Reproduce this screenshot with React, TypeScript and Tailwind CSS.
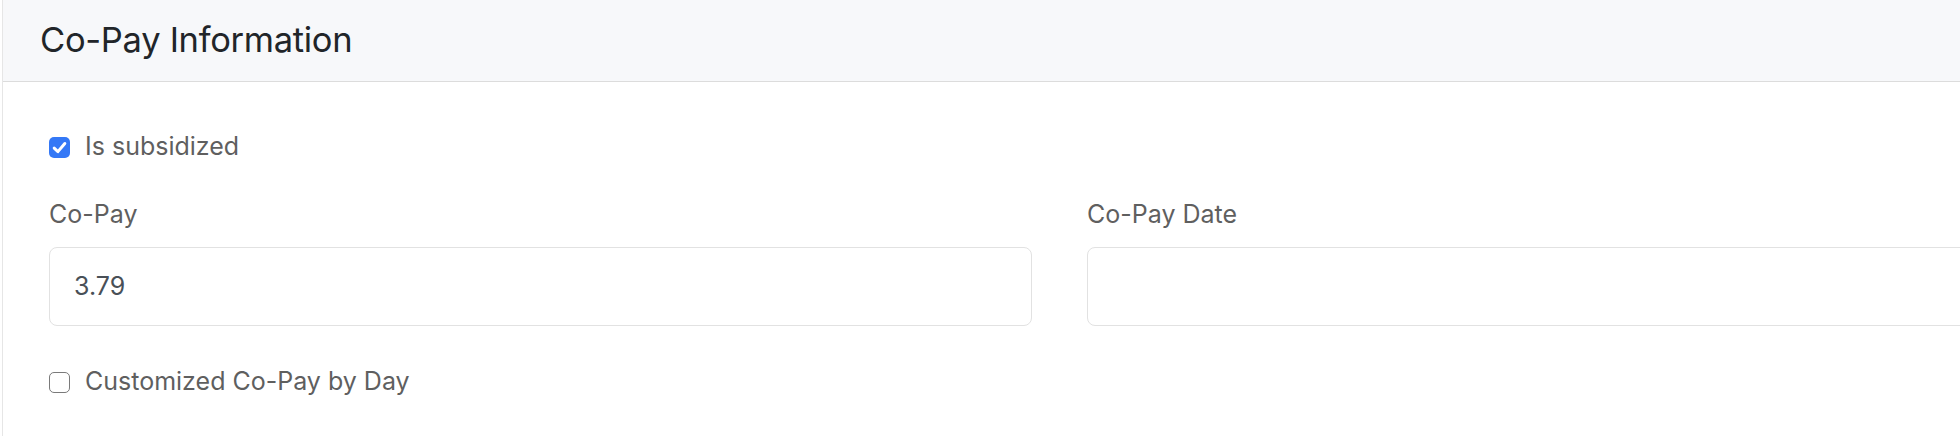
import React from "react";

function CheckedBox() {
  return (
    <span className="flex h-[21px] w-[21px] shrink-0 items-center justify-center rounded-[5px] bg-[#3478f6]">
      <svg width="17" height="17" viewBox="0 0 16 16" fill="none">
        <path d="M3 8.6 L6.5 11.9 L13 4.2" stroke="white" strokeWidth="2.8" strokeLinecap="round" strokeLinejoin="round" />
      </svg>
    </span>
  );
}

function EmptyBox() {
  return <span className="block h-[21px] w-[21px] shrink-0 rounded-[5px] border-[1.5px] border-[#7a7a7a] bg-white" />;
}

export default function App() {
  return (
    <div className="h-[436px] w-[1960px] overflow-hidden bg-white" style={{ fontFamily: "Inter, 'Noto Sans', sans-serif" }}>
      <div className="ml-[2px] h-full w-[2120px] border-l border-[#e6e6e6] bg-white">
        <div className="flex h-[82px] items-center border-b border-[#dcdcdc] bg-[#f7f8fa] pl-[37px]">
          <h4 className="text-[34.5px] font-normal leading-none tracking-[-0.3px] text-[#212529]">Co-Pay Information</h4>
        </div>
        <div className="px-[46px] pt-[49px]">
          <label className="flex h-[32px] items-center gap-[15px]">
            <CheckedBox />
            <span className="text-[25px] text-[#5f5f5f]">Is subsidized</span>
          </label>
          <div className="mt-[33px] grid grid-cols-[983px_983px] gap-x-[55px]">
            <div>
              <div className="flex h-[38px] items-center text-[25px] text-[#5f5f5f]">Co-Pay</div>
              <div className="mt-[13px] flex h-[79px] items-center rounded-[8px] border border-[#e2e2e2] bg-white pl-[24px] text-[25px] text-[#495057]">
                3.79
              </div>
            </div>
            <div>
              <div className="flex h-[38px] items-center text-[25px] text-[#5f5f5f]">Co-Pay Date</div>
              <div className="mt-[13px] h-[79px] rounded-[8px] border border-[#e2e2e2] bg-white" />
            </div>
          </div>
          <label className="mt-[40px] flex h-[32px] items-center gap-[15px]">
            <EmptyBox />
            <span className="text-[25px] text-[#5f5f5f]">Customized Co-Pay by Day</span>
          </label>
        </div>
      </div>
    </div>
  );
}
